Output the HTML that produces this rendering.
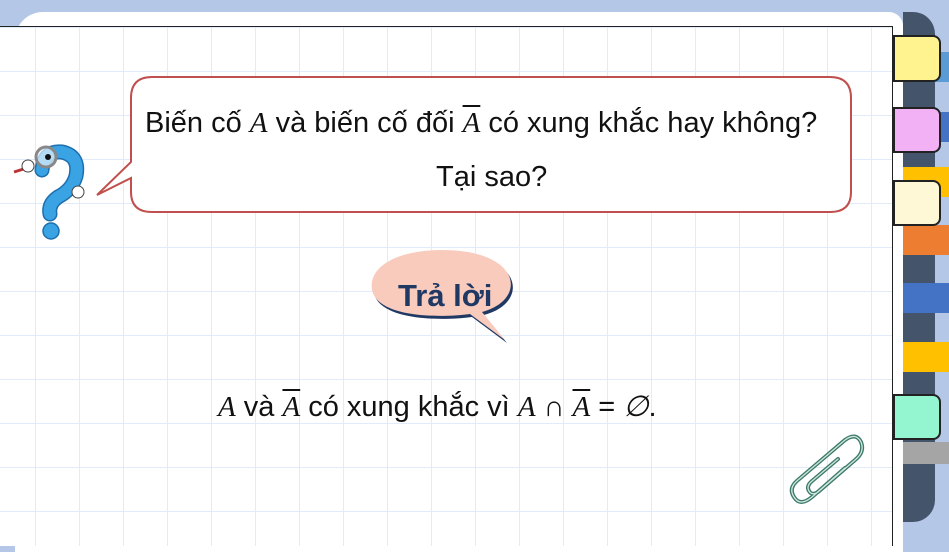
<!DOCTYPE html>
<html><head><meta charset="utf-8"><style>
*{margin:0;padding:0;box-sizing:border-box}
body{width:949px;height:538px;overflow:hidden;background:#b4c7e7;position:relative;font-family:"Liberation Sans",sans-serif}
.abs{position:absolute}
.card{left:15px;top:12px;width:888px;height:540px;background:#fff;border-radius:28px 14px 0 0}
.grid{left:0;top:26px;width:893px;height:520px;background-color:#fff;
background-image:linear-gradient(to right,#e0ecf9 1px,transparent 1px),linear-gradient(to bottom,#e0ecf9 1px,transparent 1px);
background-size:44px 44px;background-position:35px 0;border-top:1.5px solid #222;border-right:1.5px solid #222}
.m{font-family:"Liberation Serif",serif;font-style:italic}
.ov{text-decoration:overline;text-decoration-thickness:1.5px;font-family:"Liberation Serif",serif;font-style:italic}
.t{font-size:29px;color:#111;white-space:nowrap}
.tab{border:2px solid #222;border-radius:0 8px 8px 0;left:893px;width:48px}
</style></head><body>
<div class="abs" style="left:903px;top:12px;width:32px;height:510px;background:#44546a;border-radius:0 22px 22px 0"></div>
<div class="abs" style="left:903px;top:52px;width:46px;height:30px;background:#5b9bd5"></div>
<div class="abs" style="left:903px;top:112px;width:46px;height:30px;background:#4472c4"></div>
<div class="abs" style="left:903px;top:167px;width:46px;height:30px;background:#ffc000"></div>
<div class="abs" style="left:903px;top:225px;width:46px;height:30px;background:#ed7d31"></div>
<div class="abs" style="left:903px;top:283px;width:46px;height:30px;background:#4472c4"></div>
<div class="abs" style="left:903px;top:342px;width:46px;height:30px;background:#ffc000"></div>
<div class="abs" style="left:903px;top:442px;width:46px;height:22px;background:#a5a5a5"></div>
<div class="abs card"></div>
<div class="abs grid"></div>
<div class="abs tab" style="top:35px;height:47px;background:#fff38f"></div>
<div class="abs tab" style="top:107px;height:46px;background:#f2b1f5"></div>
<div class="abs tab" style="top:180px;height:46px;background:#fff8d6"></div>
<div class="abs tab" style="top:394px;height:46px;background:#94f5d1"></div>

<svg class="abs" style="left:0;top:0" width="949" height="538">
<path d="M42 170 Q44 150 62 152 Q80 156 76 176 Q72 190 58 197 Q48 204 50 214" fill="none" stroke="#1d6fae" stroke-width="15" stroke-linecap="round"/>
<path d="M42 170 Q44 150 62 152 Q80 156 76 176 Q72 190 58 197 Q48 204 50 214" fill="none" stroke="#3aa3e3" stroke-width="12" stroke-linecap="round"/>
<circle cx="51" cy="231" r="8" fill="#3aa3e3" stroke="#1d6fae" stroke-width="1.5"/>
<line x1="14" y1="172" x2="30" y2="167" stroke="#b33" stroke-width="3"/>
<circle cx="28" cy="166" r="6" fill="#fff" stroke="#444"/>
<circle cx="46" cy="157" r="10" fill="#e8f4fb" fill-opacity="0.7" stroke="#888" stroke-width="3"/>
<circle cx="48" cy="157" r="3" fill="#111"/>
<circle cx="78" cy="192" r="6" fill="#fff" stroke="#444"/>
<path d="M152 77 H830 Q851 77 851 98 V192 Q851 212 830 212 H152 Q131 212 131 192 V178 L97 195 L131 162 V98 Q131 77 152 77 Z" fill="#fff" stroke="#c0504d" stroke-width="2"/>
<path d="M442 250 C522 250 528 300 482 312 L505 340 L470 314 C440 318 378 318 372 290 C368 265 400 250 442 250 Z" fill="#1f3864" transform="translate(2,3)"/>
<path d="M442 250 C522 250 528 300 482 312 L505 340 L470 314 C440 318 378 318 372 290 C368 265 400 250 442 250 Z" fill="#f8cbbd"/>
<path d="M845 468 L812 497 Q800 507 794 497 Q788 488 798 480 L845 440 Q856 432 861 442 Q865 452 855 460 L818 492 Q812 496 809 491 Q806 486 812 481 L838 459" fill="none" stroke="#3d7a6a" stroke-width="4" stroke-linecap="round"/>
<path d="M845 468 L812 497 Q800 507 794 497 Q788 488 798 480 L845 440 Q856 432 861 442 Q865 452 855 460 L818 492 Q812 496 809 491 Q806 486 812 481 L838 459" fill="none" stroke="#cfe8de" stroke-width="1.3" stroke-linecap="round"/>
</svg>
<div class="abs t" style="left:145px;top:107px">Biến cố <span class="m">A</span> và biến cố đối <span class="ov">A</span> có xung khắc hay không?</div>
<div class="abs t" style="left:436px;top:161px">Tại sao?</div>
<div class="abs" style="left:398px;top:278px;font-size:31px;font-weight:bold;color:#1f3864">Trả lời</div>
<div class="abs t" style="left:218px;top:389px"><span class="m">A</span> và <span class="ov">A</span> có xung khắc vì <span class="m">A</span> ∩ <span class="ov">A</span> = <span class="m">∅</span>.</div>
</body></html>
